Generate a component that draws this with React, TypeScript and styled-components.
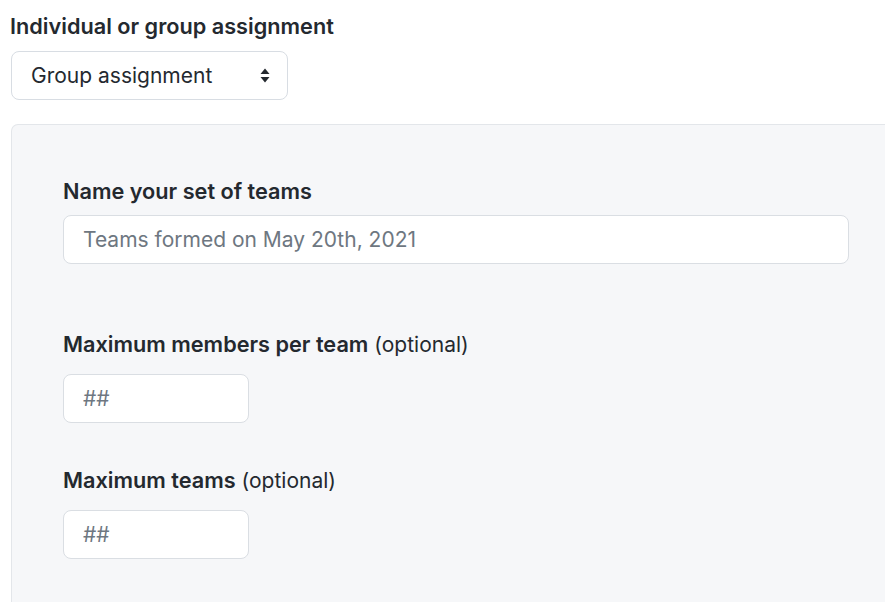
import styled, { createGlobalStyle } from "styled-components";

const GlobalStyle = createGlobalStyle`
  html, body {
    margin: 0;
    padding: 0;
    background: #fff;
  }
  body {
    font-family: Inter, "Noto Sans", "Liberation Sans", sans-serif;
    color: #24292f;
    overflow: hidden;
  }
`;

interface Ifield {
  id: string;
  label: string;
  optional?: boolean;
  placeholder: string;
  width: number;
  gapTop: number;
  gapLabel: number;
}

const fields: Ifield[] = [
  {
    id: "team-set-name",
    label: "Name your set of teams",
    placeholder: "Teams formed on May 20th, 2021",
    width: 786,
    gapTop: 0,
    gapLabel: 12,
  },
  {
    id: "max-members",
    label: "Maximum members per team",
    optional: true,
    placeholder: "##",
    width: 186,
    gapTop: 68,
    gapLabel: 18,
  },
  {
    id: "max-teams",
    label: "Maximum teams",
    optional: true,
    placeholder: "##",
    width: 186,
    gapTop: 45,
    gapLabel: 18,
  },
];

// up/down sort arrows of the select
const SortArrows = () => (
  <svg width="10" height="15" viewBox="0 0 10 15" aria-hidden="true">
    <path d="M5 0.5 L9.5 6 H0.5 Z" fill="#24292f" />
    <path d="M5 14.5 L9.5 9 H0.5 Z" fill="#24292f" />
  </svg>
);

const App = () => {
  return (
    <>
      <GlobalStyle />
      <Page>
        <Heading htmlFor="assignment-type">Individual or group assignment</Heading>
        <SelectWrap>
          <Select id="assignment-type" defaultValue="group">
            <option value="individual">Individual assignment</option>
            <option value="group">Group assignment</option>
          </Select>
          <Arrows>
            <SortArrows />
          </Arrows>
        </SelectWrap>
        <Panel>
          {fields.map((item: Ifield) => (
            <Field key={item.id} $gapTop={item.gapTop}>
              <Label htmlFor={item.id} $gap={item.gapLabel}>
                {item.label}
                {item.optional && <Optional> (optional)</Optional>}
              </Label>
              <Input id={item.id} placeholder={item.placeholder} $width={item.width} />
            </Field>
          ))}
        </Panel>
      </Page>
    </>
  );
};

const Page = styled.div`
  display: flex;
  flex-direction: column;
  align-items: flex-start;
  padding: 14px 0 0 11px;
  min-height: 602px;
  box-sizing: border-box;
`;
const Heading = styled.label`
  font-size: 21.7px;
  line-height: 24px;
  font-weight: 600;
  margin-left: -1px;
`;
const SelectWrap = styled.div`
  position: relative;
  margin-top: 13px;
`;
const Select = styled.select`
  appearance: none;
  width: 277px;
  height: 49px;
  box-sizing: border-box;
  padding: 0 40px 0 19px;
  border: 1px solid #d8dde3;
  border-radius: 8px;
  background: #fff;
  font-family: inherit;
  font-size: 21px;
  color: #24292f;
  outline: none;
`;
const Arrows = styled.span`
  position: absolute;
  top: 17px;
  right: 18px;
  pointer-events: none;
  display: flex;
`;
const Panel = styled.div`
  align-self: stretch;
  margin-top: 24px;
  margin-right: -20px;
  flex: 1;
  padding: 54px 0 0 51px;
  background: #f6f7f9;
  border: 1px solid #e3e6ea;
  border-bottom: none;
  border-top-left-radius: 7px;
  display: flex;
  flex-direction: column;
`;
const Field = styled.div<{ $gapTop: number }>`
  display: flex;
  flex-direction: column;
  align-items: flex-start;
  margin-top: ${(p) => p.$gapTop}px;
`;
const Label = styled.label<{ $gap: number }>`
  display: block;
  height: 24px;
  font-size: 21.7px;
  line-height: 24px;
  font-weight: 600;
  white-space: nowrap;
  margin-bottom: ${(p) => p.$gap}px;
`;
const Optional = styled.span`
  font-size: 21px;
  line-height: 1;
  font-weight: 400;
`;
const Input = styled.input<{ $width: number }>`
  width: ${(p) => p.$width}px;
  height: 49px;
  box-sizing: border-box;
  padding: 0 19px;
  border: 1px solid #dadee3;
  border-radius: 8px;
  background: #fff;
  font-family: inherit;
  font-size: 21px;
  color: #24292f;
  outline: none;
  &::placeholder {
    color: #6e7781;
  }
`;

export default App;
